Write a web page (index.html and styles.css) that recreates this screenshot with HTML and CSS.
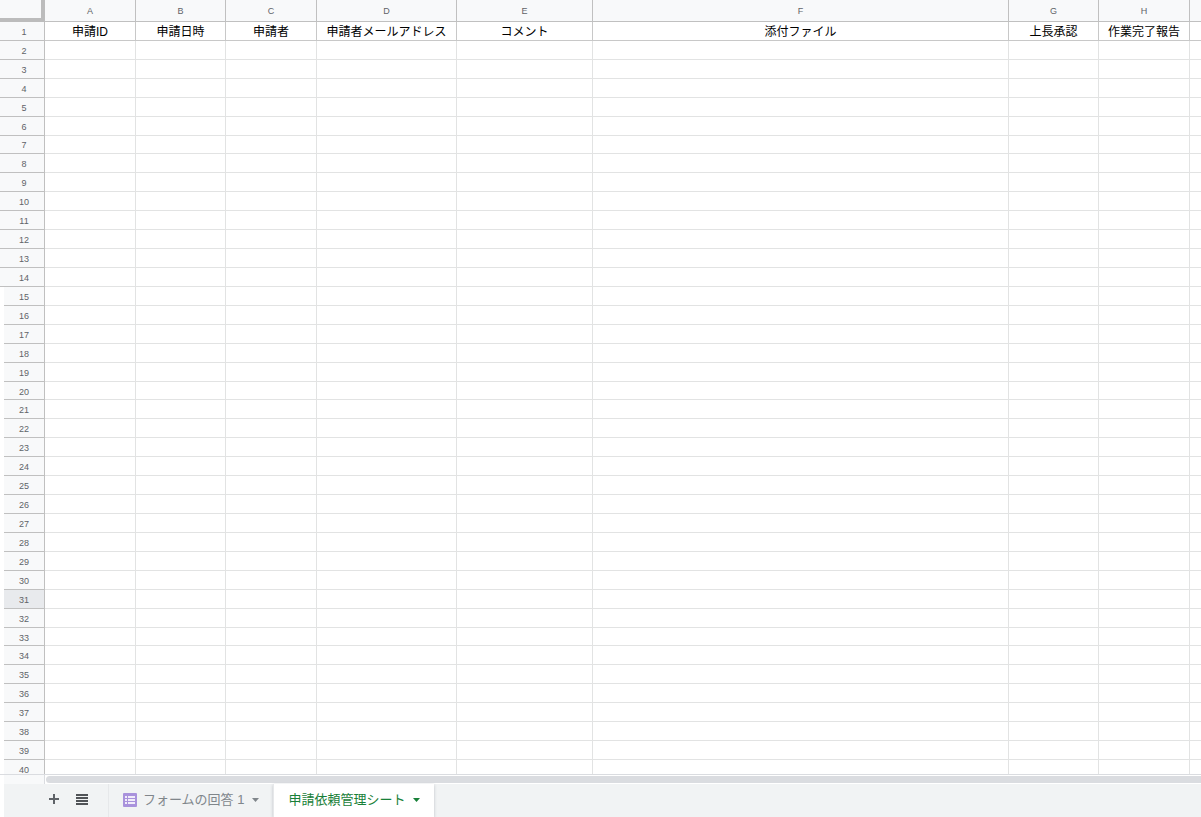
FILE: index.html
```html
<!DOCTYPE html>
<html lang="ja">
<head>
<meta charset="utf-8">
<title>申請依頼管理シート</title>
<link rel="stylesheet" href="styles.css">
</head>
<body>
<main class="sheet">
<table class="grid">
<colgroup>
<col class="col-index"><col class="col-a"><col class="col-b"><col class="col-c"><col class="col-d"><col class="col-e"><col class="col-f"><col class="col-g"><col class="col-h"><col>
</colgroup>
<thead>
<tr><td class="corner"></td><th scope="col">A</th><th scope="col">B</th><th scope="col">C</th><th scope="col">D</th><th scope="col">E</th><th scope="col">F</th><th scope="col">G</th><th scope="col">H</th><th></th></tr>
</thead>
<tbody id="rows">
<tr class="titles"><th scope="row">1</th><td>申請ID</td><td>申請日時</td><td>申請者</td><td>申請者メールアドレス</td><td>コメント</td><td>添付ファイル</td><td>上長承認</td><td>作業完了報告</td><td></td></tr>
</tbody>
</table>
</main>
<div class="scroll-row">
<div class="scroll-corner"></div>
<div class="scroll-track"><div class="scroll-thumb"></div></div>
</div>
<nav class="tabs" aria-label="シート">
<button class="tool add" aria-label="シートを追加"><svg width="12" height="12" viewBox="0 0 12 12"><path d="M6 1v10M1 6h10" stroke="#5f6368" stroke-width="2"/></svg></button>
<button class="tool list" aria-label="すべてのシート"><svg width="12" height="12" viewBox="0 0 12 12"><path d="M0 2h12M0 5h12M0 8h12M0 11h12" stroke="#505357" stroke-width="2"/></svg></button>
<button class="tab">
<svg width="14" height="14" viewBox="0 0 14 14"><rect width="14" height="14" rx="1" fill="#a992dc"/><path d="M2 3h10v8H2z" fill="#f1ecfa"/><path d="M2 5.5h10M2 8.5h10M4.5 3v8" stroke="#a992dc"/></svg>
<span class="tab-name">フォームの回答 1</span>
<svg class="arrow" width="7" height="4" viewBox="0 0 7 4"><path d="M0 0h7L3.5 4z" fill="currentColor"/></svg>
</button>
<button class="tab active" aria-current="page">
<span class="tab-name">申請依頼管理シート</span>
<svg class="arrow" width="7" height="4" viewBox="0 0 7 4"><path d="M0 0h7L3.5 4z" fill="currentColor"/></svg>
</button>
</nav>
<script src="rows.js"></script>
</body>
</html>
```
FILE: styles.css
```css
* {
  box-sizing: border-box;
}

body {
  display: flex;
  flex-direction: column;
  height: 100vh;
  margin: 0;
  overflow: hidden;
  background: #fff;
  font-family: "Liberation Sans", "Noto Sans CJK JP", sans-serif;
}

.sheet {
  flex: 1;
  min-height: 0;
  overflow: hidden;
}

.grid {
  width: 100%;
  table-layout: fixed;
  border-collapse: separate;
  border-spacing: 0;
}

.col-index { width: 45px; }
.col-a, .col-c, .col-h { width: 91px; }
.col-b, .col-g { width: 90px; }
.col-d { width: 140px; }
.col-e { width: 136px; }
.col-f { width: 416px; }

.grid th,
.grid td {
  height: 19px;
  padding: 0;
  border: 0 solid #e2e3e3;
  border-width: 0 1px 1px 0;
  text-align: center;
  vertical-align: middle;
  white-space: nowrap;
  font-size: 12px;
  line-height: 16px;
}

.grid tbody tr:nth-child(13n + 7) > * {
  height: 18px;
}

.grid th {
  border-color: #c0c0c0;
  background: #f8f9fa;
  color: #5f6368;
  font-size: 9px;
  font-weight: 400;
}

.grid thead th {
  height: 22px;
}

.grid thead .corner {
  height: 22px;
  border: solid #bcbcbc;
  border-width: 0 4px 4px 0;
  background: #f8f9fa;
}

.grid tbody th {
  padding: 1px 0 0 4px;
}

.grid tbody tr:nth-child(n + 15) th {
  padding-left: 0;
  border-bottom: 0;
  border-left: 4px solid #fff;
  background: #f8f9fa linear-gradient(#c0c0c0, #c0c0c0) bottom / 100% 1px no-repeat;
}

.grid .titles td {
  padding-top: 2px;
  border-color: #c8c8c8;
  color: #000;
}

.grid tbody .selected.selected th {
  background-color: #e8eaed;
}

.grid tr > :last-child {
  border-right: 0;
}

.scroll-row {
  display: flex;
  height: 10px;
  padding-left: 4px;
  border-top: 1px solid #dadce0;
}

.scroll-corner {
  width: 41px;
  border-right: 1px solid #dadce0;
  background: #f8f9fa;
}

.scroll-track {
  flex: 1;
  padding: 1px 0 1px 1px;
}

.scroll-thumb {
  height: 7px;
  border-radius: 4px 0 0 4px;
  background: #dadce0;
}

.tabs {
  display: flex;
  height: 33px;
  margin-left: 4px;
  background: #f1f3f4;
}

.tabs button {
  display: flex;
  align-items: center;
  margin: 0;
  border: 0;
  background: none;
  font: 13px/20px "Liberation Sans", "Noto Sans CJK JP", sans-serif;
}

.tabs .tool {
  width: 28px;
  justify-content: center;
  padding: 0 0 3px;
}

.tabs .add {
  margin-left: 36px;
}

.tabs .list {
  margin-right: 12px;
}

.tabs .tab {
  padding: 0 14px 2px;
  border-left: 1px solid #e6e8ea;
  color: #80868b;
  white-space: nowrap;
}

.tab-name {
  margin-left: 6px;
}

.arrow {
  margin-left: 8px;
}

.tabs .active {
  background: #fff;
  color: #188038;
  box-shadow: 0 1px 3px #bdc1c6;
}

.active .tab-name {
  margin-left: 0;
}
```
FILE: rows.js
```js
const body = document.getElementById("rows");
for (let n = 2; n <= 40; n++) {
  const row = body.insertRow();
  if (n === 31) row.className = "selected";
  const head = document.createElement("th");
  head.scope = "row";
  head.textContent = n;
  row.append(head);
  for (let c = 0; c < 9; c++) row.insertCell();
}
```
